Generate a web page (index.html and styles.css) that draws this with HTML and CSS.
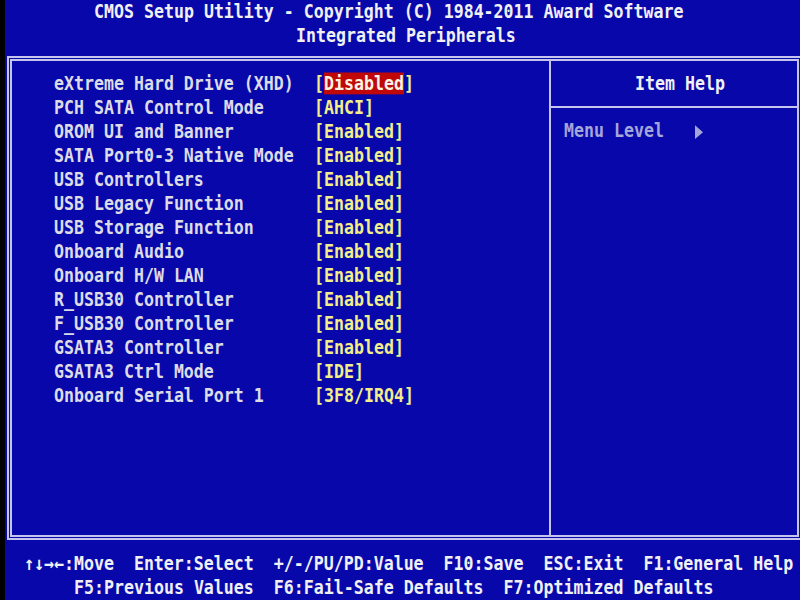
FILE: index.html
```html
<!DOCTYPE html>
<html>
<head>
<meta charset="utf-8">
<link rel="stylesheet" href="styles.css">
</head>
<body>
<div class="screen">
  <header class="head">
    <div class="t title">CMOS Setup Utility - Copyright (C) 1984-2011 Award Software</div>
    <div class="t subtitle">Integrated Peripherals</div>
  </header>
  <main class="frame">
    <section class="items">
      <div class="row t"><span class="name">eXtreme Hard Drive (XHD)</span><span class="val">[<span class="sel">Disabled</span>]</span></div>
      <div class="row t"><span class="name">PCH SATA Control Mode</span><span class="val">[AHCI]</span></div>
      <div class="row t"><span class="name">OROM UI and Banner</span><span class="val">[Enabled]</span></div>
      <div class="row t"><span class="name">SATA Port0-3 Native Mode</span><span class="val">[Enabled]</span></div>
      <div class="row t"><span class="name">USB Controllers</span><span class="val">[Enabled]</span></div>
      <div class="row t"><span class="name">USB Legacy Function</span><span class="val">[Enabled]</span></div>
      <div class="row t"><span class="name">USB Storage Function</span><span class="val">[Enabled]</span></div>
      <div class="row t"><span class="name">Onboard Audio</span><span class="val">[Enabled]</span></div>
      <div class="row t"><span class="name">Onboard H/W LAN</span><span class="val">[Enabled]</span></div>
      <div class="row t"><span class="name">R_USB30 Controller</span><span class="val">[Enabled]</span></div>
      <div class="row t"><span class="name">F_USB30 Controller</span><span class="val">[Enabled]</span></div>
      <div class="row t"><span class="name">GSATA3 Controller</span><span class="val">[Enabled]</span></div>
      <div class="row t"><span class="name">GSATA3 Ctrl Mode</span><span class="val">[IDE]</span></div>
      <div class="row t"><span class="name">Onboard Serial Port 1</span><span class="val">[3F8/IRQ4]</span></div>
    </section>
    <aside class="help">
      <div class="t help-title">Item Help</div>
      <div class="help-sep"></div>
      <div class="t menu">Menu Level   <span class="arrow"></span></div>
    </aside>
  </main>
  <footer class="foot">
    <div class="t keys1">↑↓→←:Move  Enter:Select  +/-/PU/PD:Value  F10:Save  ESC:Exit  F1:General Help</div>
    <div class="t keys2">F5:Previous Values  F6:Fail-Safe Defaults  F7:Optimized Defaults</div>
  </footer>
</div>
</body>
</html>
```

FILE: styles.css
```css
html, body {
  margin: 0;
  padding: 0;
  background: #0808aa;
}

.screen {
  width: 800px;
  height: 600px;
  overflow: hidden;
  background: #0808aa;
  box-shadow: inset 5px 0 0 #000;
  font-family: "DejaVu Sans Mono", "Liberation Mono", monospace;
  font-weight: bold;
  font-size: 16.6px;
  color: #ececf4;
}

.t {
  display: block;
  height: 24px;
  line-height: 24px;
  white-space: pre;
  transform: scaleY(1.15);
}

.head {
  height: 48px;
}

.title {
  padding-left: 94px;
  color: #f0f0f4;
}

.subtitle {
  padding-left: 296px;
  color: #f0f0f4;
}

.frame {
  margin-top: 8px;
  margin-left: 7px;
  width: 795px;
  height: 484px;
  box-sizing: border-box;
  border: 5px double #c4c4ec;
  display: flex;
}

.items {
  flex: 0 0 537px;
  box-sizing: border-box;
  padding-top: 11px;
  padding-left: 42px;
}

.row {
  display: flex;
}

.name {
  width: 260px;
  color: #dcdce6;
}

.val {
  color: #f2ee8a;
}

.sel {
  background: #c00808;
  color: #f8f4e4;
}

.help {
  flex: 1;
  border-left: 2px solid #c4c4ec;
  padding-top: 11px;
}

.help-title {
  padding-left: 84px;
  color: #f0f0f4;
}

.help-sep {
  height: 2px;
  margin: 10px 0 11px;
  background: #c4c4ec;
}

.menu {
  padding-left: 13px;
  color: #a4a6da;
}

.arrow {
  display: inline-block;
  width: 0;
  height: 0;
  border-left: 8px solid #a4a6da;
  border-top: 6px solid transparent;
  border-bottom: 6px solid transparent;
  vertical-align: -2px;
  margin-left: 1px;
}

.foot {
  margin-top: 12px;
  color: #f0f0f4;
}

.keys1 {
  padding-left: 24px;
}

.keys2 {
  padding-left: 74px;
}
```
